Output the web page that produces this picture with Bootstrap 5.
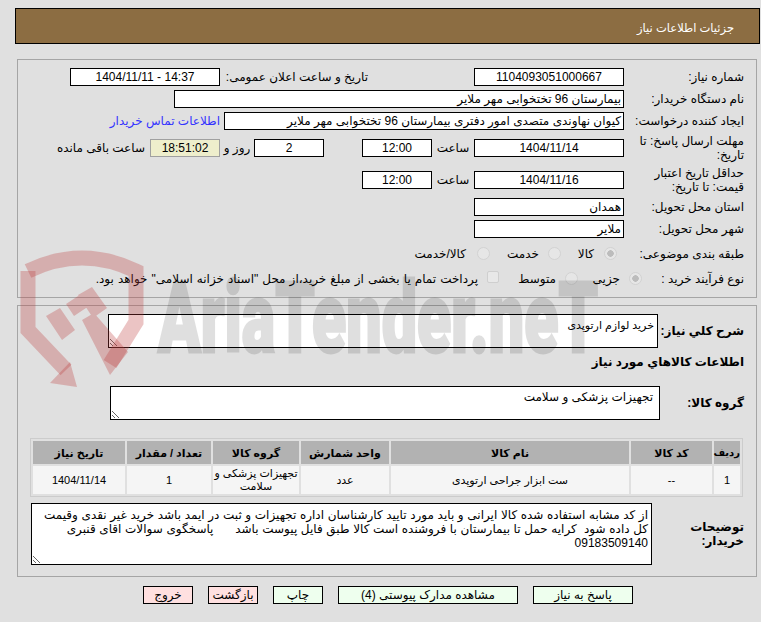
<!DOCTYPE html>
<html lang="fa" dir="rtl"><head><meta charset="utf-8">
<link href="https://cdn.jsdelivr.net/npm/bootstrap@5.3.0/dist/css/bootstrap.min.css" rel="stylesheet">
<style>
html,body{height:622px;overflow:hidden}
body{background:#e0e0e0;font-family:"Liberation Sans","DejaVu Sans",sans-serif;font-size:12px;color:#000;line-height:14px}
.pagewrap{position:relative;width:761px;height:622px;padding:8px 1px 0 15px}
.titlebar{background:#8c6d42;border:1px solid #000;height:36px;color:#fff;font-size:11.5px;padding:3px 25px 0 0;margin-bottom:15px}
.boxa,.boxb{border:1px solid #a5a5a5;margin:0 3px 0 2px}
.boxa{height:239px;padding:6px 12px 0 0}
.boxb{height:272px;margin-top:7px;padding:8px 12px 0 0}
.h22{height:22px}.h32{height:32px}.h28{height:28px}
.rdo{appearance:none;width:13px;height:13px;border-radius:50%;background:#e6e6e6;border:1px solid #d2d2d2;flex:none;margin:0 0 2px;position:relative}
.rdo:checked{background:radial-gradient(circle,#bcbcbc 0 3px,#e6e6e6 3.5px)}
.cbx{appearance:none;width:12px;height:12px;background:#e8e8e8;border:1px solid #cfcfcf;border-radius:2px;flex:none;margin:0 0 5px}
.lb{width:120px;flex:none;white-space:normal}
.lb102{width:102px;flex:none}
.lb86{width:86px;flex:none}
.fd{background:#fff;border:1px solid #000;height:18px;line-height:16px;padding:0 2px;white-space:nowrap;overflow:hidden;flex:none;text-align:right}
.ctr{text-align:center}
.w150{width:150px}.w450{width:450px}.w400{width:400px}.w70{width:70px}
.timefd{background:#eeeecc;border-color:#a0a0a0}
.sp106{margin-right:106px}.sp38{margin-right:38px}.sp4{margin-right:4px}.sp5{margin-right:5px}
.sp7{margin-right:7px}.sp9{margin-right:9px}.sp10{margin-right:10px}.sp11{margin-right:11px}
.l148{width:148px;flex:none}.l42{width:42px;flex:none;text-align:center}.l34{width:34px;flex:none;text-align:center}
.l33{width:33px;flex:none}.l49{width:49px;flex:none}.l57{width:57px;flex:none}.l42r{width:42px;flex:none}
.wide{word-spacing:.7px}
.blue{color:#3333ff;text-decoration:none}
.ta{display:block;background:#fff;border:1px solid #000;border-radius:0;font:inherit;color:#000;outline:0;overflow:hidden;resize:both;flex:none;direction:rtl;white-space:pre;margin:0;line-height:14px}
.ta1{width:550px;height:34px;padding:3px 3px;font-size:11px}
.ta2{width:550px;height:34px;padding:3px 6px;margin-right:-2px}
.ta3{width:621px;height:62px;padding:4px 3px;word-spacing:.3px}
.strongl{font-weight:700}
.goods{border-collapse:separate;border-spacing:2px;table-layout:fixed;width:712px;height:59px;border:1px solid #ccc;margin:18px 1px 6px 0;text-align:center;font-size:11px}
.goods th{background:#b2b2b2;height:23px;padding:0;font-weight:700;text-align:center}
.goods th:first-child{font-size:10px}
.goods td{background:#f5f5f5;height:28px;padding:0;line-height:13px;text-align:center}
.c1{width:26px}.c2{width:81px}.c3{width:238px}.c4{width:88px}.c5{width:86px}.c6{width:84px}.c7{width:92px}
.lt{width:92px;line-height:14px;flex:none}
.mt10{margin-top:10px}
.btrow{gap:15px;margin:9px 127px 0 0}
.bt{height:18px;border:1px solid #000;font-size:12px;line-height:16px;padding:0;border-radius:0;color:#000;flex:none}
.gbt{background:#eeffee}.rbt{background:#ffe0e0}
.gbt:hover{background:#eeffee}.rbt:hover{background:#ffe0e0}
.w100{width:100px}.w180{width:180px}.w50{width:50px}
.wm{position:absolute;left:0;top:0;width:761px;height:622px;pointer-events:none}
.wm .sh{fill:none;stroke:rgba(190,60,60,.3);stroke-width:15}
.wm .gv{fill:rgba(190,60,60,.3)}
.wm text{fill:#000;stroke:#000;stroke-width:3px;opacity:.12;font-family:Roboto,"Liberation Sans",sans-serif;font-weight:900;font-size:98px}
</style></head><body>
<div class="pagewrap">
<div class="titlebar d-flex align-items-center">جزئیات اطلاعات نیاز</div>
<div class="boxa">
<div class="d-flex align-items-center h22"><div class="lb">شماره نیاز:</div><div class="fd ctr w150">1104093051000667</div><div class="l148 sp106">تاریخ و ساعت اعلان عمومی:</div><div class="fd ctr w150">14:37 - 1404/11/11</div></div>
<div class="d-flex align-items-center h22"><div class="lb">نام دستگاه خریدار:</div><div class="fd w450">بیمارستان 96 تختخوابی مهر ملایر</div></div>
<div class="d-flex align-items-center h22"><div class="lb">ایجاد کننده درخواست:</div><div class="fd w400">کیوان نهاوندی متصدی امور دفتری بیمارستان 96 تختخوابی مهر ملایر</div><a class="blue sp4" href="#">اطلاعات تماس خریدار</a></div>
<div class="d-flex align-items-center h32"><div class="lb">مهلت ارسال پاسخ: تا تاریخ:</div><div class="fd ctr w150">1404/11/14</div><div class="l42">ساعت</div><div class="fd ctr w70">12:00</div><div class="fd ctr w70 sp38">2</div><div class="l34">روز و</div><div class="fd ctr w70 timefd">18:51:02</div><div class="sp5">ساعت باقی مانده</div></div>
<div class="d-flex align-items-center h32"><div class="lb">حداقل تاریخ اعتبار قیمت: تا تاریخ:</div><div class="fd ctr w150">1404/11/16</div><div class="l42">ساعت</div><div class="fd ctr w70">12:00</div></div>
<div class="d-flex align-items-center h22"><div class="lb">استان محل تحویل:</div><div class="fd w150">همدان</div></div>
<div class="d-flex align-items-center h22"><div class="lb">شهر محل تحویل:</div><div class="fd w150">ملایر</div></div>
<div class="d-flex align-items-center h28"><div class="lb">طبقه بندی موضوعی:</div><input class="rdo sp7" type="radio" name="t" checked disabled><div class="l33 sp10">کالا</div><input class="rdo" type="radio" name="t" disabled><div class="l49 sp9">خدمت</div><input class="rdo" type="radio" name="t" disabled><div class="sp11">کالا/خدمت</div></div>
<div class="d-flex align-items-center h22"><div class="lb102">نوع فرآیند خرید :</div><input class="rdo" type="radio" name="p" checked disabled><div class="l42r sp9">جزیی</div><input class="rdo" type="radio" name="p" disabled><div class="l57 sp9">متوسط</div><input class="cbx" type="checkbox" disabled><div class="sp9 text-nowrap wide">پرداخت تمام یا بخشی از مبلغ خرید،از محل "اسناد خزانه اسلامی" خواهد بود.</div></div>
</div>
<div class="boxb">
<div class="d-flex align-items-center"><div class="lb86 strongl">شرح کلي نیاز:</div><textarea class="ta ta1" readonly>خرید لوازم ارتوپدی</textarea></div>
<div class="d-flex align-items-center h28 strongl">اطلاعات کالاهاي مورد نیاز</div>
<div class="d-flex align-items-center mt10"><div class="lb86 strongl">گروه کالا:</div><textarea class="ta ta2" readonly>تجهیزات پزشکی و سلامت</textarea></div>
<table class="goods"><colgroup><col class="c1"><col class="c2"><col class="c3"><col class="c4"><col class="c5"><col class="c6"><col class="c7"></colgroup>
<tr><th>ردیف</th><th>کد کالا</th><th>نام کالا</th><th>واحد شمارش</th><th>گروه کالا</th><th>تعداد / مقدار</th><th>تاریخ نیاز</th></tr>
<tr><td>1</td><td>--</td><td>ست ابزار جراحی ارتوپدی</td><td>عدد</td><td>تجهیزات پزشکی و سلامت</td><td>1</td><td>1404/11/14</td></tr></table>
<div class="d-flex align-items-center"><div class="lt strongl">توضیحات خریدار:</div><textarea class="ta ta3" readonly>از کد مشابه استفاده شده کالا ایرانی و باید مورد تایید کارشناسان اداره تجهیزات و ثبت در ایمد باشد خرید غیر نقدی وقیمت
کل داده شود  کرایه حمل تا بیمارستان با فروشنده است کالا طبق فایل پیوست باشد      پاسخگوی سوالات اقای قنبری 
09183509140</textarea></div>
</div>
<div class="d-flex btrow">
<button class="btn bt gbt w100">پاسخ به نیاز</button>
<button class="btn bt gbt w180">مشاهده مدارک پیوستی (4)</button>
<button class="btn bt gbt w50">چاپ</button>
<button class="btn bt rbt w50">بازگشت</button>
<button class="btn bt rbt w50">خروج</button>
</div>
<svg class="wm" viewBox="0 0 761 622" direction="ltr">
<path class="sh" d="M28 271Q82 245 136 271V322L110 364"/>
<path class="sh" d="M28 271V330L66 370"/>
<path class="gv" d="M46 316L60 308L75 330L62 340ZM78 295L92 287L107 308L93 318ZM66 304L81 294L89 306L74 316ZM82 320L94 313L128 352L110 375ZM50 383L70 362L77 387Z"/>
<text x="158" y="352" textLength="440" lengthAdjust="spacingAndGlyphs">AriaTender.neT</text>
</svg>
</div>
<script src="https://cdn.jsdelivr.net/npm/bootstrap@5.3.0/dist/js/bootstrap.bundle.min.js"></script>
</body></html>
